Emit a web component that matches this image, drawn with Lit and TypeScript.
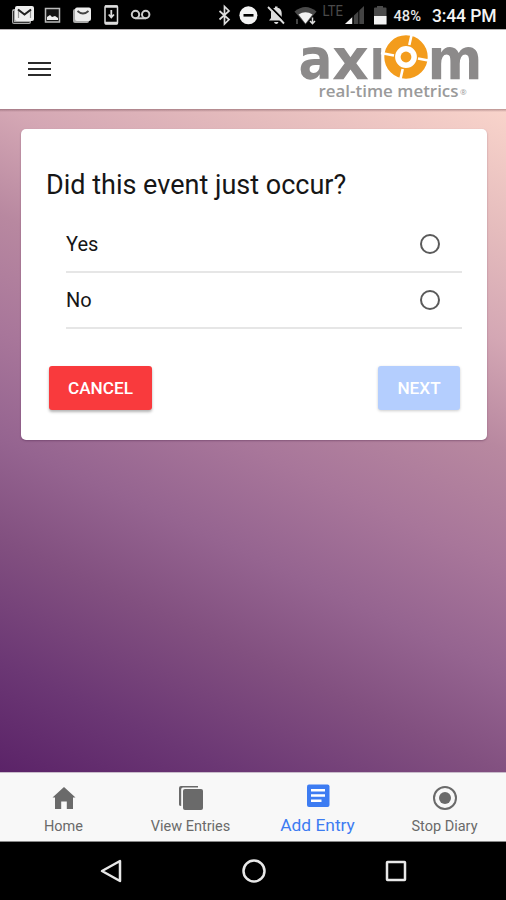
import { LitElement, css, html, svg } from "lit";
import { customElement, property, state } from "lit/decorators.js";
import { classMap } from "lit/directives/class-map.js";

@customElement("status-bar")
export class StatusBar extends LitElement {
  static styles = css`
    :host {
      display: block;
      height: 29px;
      background: #000;
      border-bottom: 1px solid #b4b0b2;
    }

    svg {
      display: block;
    }

    text {
      font-family: Roboto, sans-serif;
      fill: #e8e8e8;
    }

    .lte {
      font-size: 15px;
      fill: #4a4a4a;
    }

    .battery {
      font-size: 14px;
      font-weight: 500;
    }

    .clock {
      font-size: 17.5px;
      font-weight: 500;
      fill: #f4f4f4;
    }
  `;

  render() {
    return html`
      <svg width="506" height="29" viewBox="0 0 506 29">
        <!-- mail stack -->
        <rect x="12" y="9" width="19" height="15" rx="2" fill="#aaa" />
        <path d="M13.5 11v11.500h16" fill="none" stroke="#333" stroke-width="1" />
        <rect x="15" y="6" width="19" height="15" rx="2" fill="#eee" />
        <path d="M18.500 18V10l6 4.500 6-4.500v8" fill="none" stroke="#999" stroke-width="1.200" />
        <path d="M18 9.500l6.500 5 6.500-5" fill="none" stroke="#222" stroke-width="2" />
        <!-- picture -->
        <rect x="45.500" y="8.500" width="14" height="13.500" fill="#111" stroke="#bbb" stroke-width="1.500" />
        <path d="M47 20v-3l3-2 2 2 3-1 3 2v2z" fill="#eee" />
        <!-- mail -->
        <rect x="73" y="9" width="16" height="14" rx="2" fill="#aaa" />
        <rect x="75" y="7.500" width="16" height="13.500" rx="2" fill="#eee" />
        <path d="M77.500 11q5.500 5 11 0" fill="none" stroke="#444" stroke-width="1.800" />
        <!-- download -->
        <rect x="105" y="6" width="12.500" height="18" rx="1" fill="none" stroke="#ddd" stroke-width="1.500" />
        <path d="M105 6.500h12.500M105 23h12.500" stroke="#ddd" stroke-width="2.500" />
        <path d="M111.300 10v7M108.700 14.500l2.600 3 2.600-3" fill="none" stroke="#ddd" stroke-width="1.800" />
        <!-- voicemail -->
        <g fill="none" stroke="#ccc" stroke-width="2">
          <circle cx="135.500" cy="14.500" r="3.700" />
          <circle cx="145.700" cy="14.500" r="3.700" />
          <path d="M135.500 18.300h10.200" />
        </g>
        <!-- bluetooth -->
        <path d="M219.500 11l9.500 8.500-4.500 4.500V6.500l4.500 4.500-9.500 8.500" fill="none" stroke="#ddd" stroke-width="1.700" />
        <!-- do not disturb -->
        <circle cx="248.400" cy="15.300" r="9" fill="#f2f2f2" />
        <rect x="243.500" y="14" width="10" height="2.600" fill="#000" />
        <!-- muted bell -->
        <path d="M269 20.500l2-2.500v-5q.3-4.500 4-5.200V6.500h2.500v1.300q4 .7 4.200 5.200v5l2 2.500z" fill="#ddd" />
        <path d="M274 22h4.500q-.5 2-2.200 2t-2.300-2z" fill="#ddd" />
        <path d="M270 6.500l15 15" stroke="#000" stroke-width="2" />
        <path d="M268 7l16 16.500" stroke="#ddd" stroke-width="1.800" />
        <!-- wifi -->
        <path d="M294.500 11.500q11-9 22 0l-11 13z" fill="#4a4a4a" />
        <path d="M298.500 14.500q7-4.500 14 0l-7 9z" fill="#f2f2f2" />
        <path d="M312.500 17.500v6M310 21l2.500 2.700 2.500-2.700" fill="none" stroke="#ddd" stroke-width="1.500" />
        <path d="M297 24v-5" stroke="#444" stroke-width="2" />
        <text class="lte" x="322.500" y="16" textLength="20.500" lengthAdjust="spacingAndGlyphs">LTE</text>
        <!-- signal -->
        <path d="M345 24L364 6v18z" fill="#444" />
        <path d="M345 24l7-6.500V24z" fill="#f2f2f2" />
        <path d="M353.300 6v18M358.800 6v18" stroke="#000" stroke-width="1" />
        <!-- battery -->
        <path d="M374 24V8.500q0-1 1-1h2V6h6v1.500h2.500q1 0 1 1V24z" fill="#4a4a4a" />
        <rect x="374" y="16" width="12.500" height="8.500" fill="#f2f2f2" />
        <text class="battery" x="393.500" y="21" textLength="27.500" lengthAdjust="spacingAndGlyphs">48%</text>
        <text class="clock" x="432" y="22" textLength="64.500">3:44 PM</text>
      </svg>
    `;
  }
}

@customElement("axiom-logo")
export class AxiomLogo extends LitElement {
  static styles = css`
    :host {
      display: block;
    }

    svg {
      display: block;
      overflow: visible;
    }

    .word {
      font: bold 57px "DejaVu Sans", sans-serif;
      fill: #8c8a8a;
    }

    .tagline {
      font: 600 16px "Open Sans", sans-serif;
      fill: #9a9a9a;
    }

    .mark {
      font: 8px "Open Sans", sans-serif;
      fill: #999;
    }
  `;

  render() {
    return html`
      <svg width="184" height="68" viewBox="0 0 184 68">
        <g class="word">
          <text x="-0.500" y="42.500" textLength="34" lengthAdjust="spacingAndGlyphs">a</text>
          <text x="33" y="42.500" textLength="37" lengthAdjust="spacingAndGlyphs">x</text>
          <text x="70.500" y="42.500" textLength="15.500" lengthAdjust="spacingAndGlyphs">ı</text>
          <text x="128.500" y="42.500" textLength="55" lengthAdjust="spacingAndGlyphs">m</text>
        </g>
        <circle cx="107" cy="21" r="23.500" fill="#fff" />
        <circle cx="107" cy="21" r="16.300" fill="none" stroke="#f39c1c" stroke-width="10.800" />
        <path
          d="M110.300 9L113-3M119 22.500l13 2.500M103.700 33L101 45M95 19.500L82 17"
          stroke="#fff"
          stroke-width="2.600"
        />
        <circle cx="107" cy="21" r="5.400" fill="#f39c1c" />
        <text class="tagline" x="19.500" y="61" textLength="140" lengthAdjust="spacingAndGlyphs">real-time metrics</text>
        <text class="mark" x="161" y="59">®</text>
      </svg>
    `;
  }
}

@customElement("question-card")
export class QuestionCard extends LitElement {
  @property({ type: String })
  question = "";

  @property({ type: Array })
  options: string[] = [];

  @state()
  private selected = "";

  static styles = css`
    :host {
      display: flex;
      flex-direction: column;
      box-sizing: border-box;
      height: 311px;
      padding: 38px 25px 30px 26px;
      border-radius: 5px;
      background: #fff;
      box-shadow: 0 1px 2px rgba(60, 20, 60, 0.35);
    }

    h1 {
      margin: 0 0 14px -1px;
      font-size: 27px;
      font-weight: 400;
      line-height: 36px;
      color: #161616;
    }

    .option {
      display: flex;
      align-items: center;
      justify-content: space-between;
      box-sizing: border-box;
      height: 56px;
      margin-left: 19px;
      padding-right: 22px;
      border-bottom: 2px solid #e6e6e6;
      font-size: 20px;
      color: #161616;
    }

    .radio {
      box-sizing: border-box;
      width: 20px;
      height: 20px;
      border: 2px solid #5a5a5a;
      border-radius: 50%;
    }

    .radio.checked {
      background: #3d7bf0;
    }

    .actions {
      display: flex;
      justify-content: space-between;
      margin-top: auto;
      padding: 0 2px;
    }

    button {
      height: 44px;
      padding: 0 0 1px;
      border: 0;
      border-radius: 3px;
      font: 500 17.200px Roboto, sans-serif;
      color: #fff;
      background: #f93a3d;
      box-shadow: 0 2px 3px rgba(0, 0, 0, 0.3);
    }

    .cancel {
      width: 103px;
    }

    .next {
      width: 82px;
      background: #b4cefe;
      box-shadow: 0 1px 3px rgba(0, 0, 0, 0.2);
    }
  `;

  render() {
    return html`
      <h1>${this.question}</h1>
      ${this.options.map(
        (option) => html`
          <div class="option" @click=${() => (this.selected = option)}>
            <span>${option}</span>
            <span class=${classMap({ radio: true, checked: this.selected === option })}></span>
          </div>
        `,
      )}
      <div class="actions">
        <button class="cancel">CANCEL</button>
        <button class="next">NEXT</button>
      </div>
    `;
  }
}

const tabs = [
  {
    label: "Home",
    icon: svg`<path d="M13 2L1.500 12.500H4V24h6.200v-7.500h5.600V24H22V12.500h2.500z" fill="currentColor" />`,
  },
  {
    label: "View Entries",
    icon: svg`
      <path d="M1 19.500V3q0-2 2-2h17v1.500H5q-1.800 0-1.800 1.800V21Q1 21 1 19.500z" fill="currentColor" />
      <rect x="5" y="4" width="20" height="21" rx="2" fill="currentColor" />
    `,
  },
  {
    label: "Add Entry",
    icon: svg`
      <rect x="2" y="1.500" width="22.500" height="22.500" rx="2" fill="currentColor" />
      <path d="M6 7.300h14M6 12.500h14M6 17.700h10.500" stroke="#fff" stroke-width="2.500" />
    `,
  },
  {
    label: "Stop Diary",
    icon: svg`
      <circle cx="13" cy="13" r="11" fill="none" stroke="currentColor" stroke-width="2" />
      <circle cx="13" cy="13" r="6" fill="currentColor" />
    `,
  },
];

@customElement("tab-bar")
export class TabBar extends LitElement {
  @property({ type: String })
  active = "Add Entry";

  static styles = css`
    :host {
      display: grid;
      grid-template-columns: repeat(4, 127px);
      box-sizing: border-box;
      height: 70px;
      background: #f8f8f8;
      border-top: 1px solid #c9bccb;
      border-bottom: 1px solid #888;
    }

    .tab {
      display: flex;
      flex-direction: column;
      align-items: center;
      padding-top: 12px;
      color: #6a6a6a;
      font-size: 14.500px;
      line-height: 20px;
      white-space: nowrap;
    }

    .tab span {
      margin-top: 6px;
    }

    .tab.active {
      padding-top: 10px;
      color: #3d7cf2;
      font-size: 17.400px;
    }

    svg {
      display: block;
    }
  `;

  render() {
    return tabs.map(
      (tab) => html`
        <div class=${classMap({ tab: true, active: tab.label === this.active })}>
          <svg width="26" height="26" viewBox="0 0 26 26">${tab.icon}</svg>
          <span>${tab.label}</span>
        </div>
      `,
    );
  }
}

@customElement("app-root")
export class AppRoot extends LitElement {
  static styles = css`
    :host {
      display: flex;
      flex-direction: column;
      width: 506px;
      height: 900px;
      overflow: hidden;
      font-family: Roboto, sans-serif;
      background: #000;
    }

    header {
      display: flex;
      align-items: center;
      justify-content: space-between;
      box-sizing: border-box;
      height: 79px;
      padding: 0 23px 0 28px;
      background: #fff;
    }

    .menu {
      display: flex;
      flex-direction: column;
      gap: 4px;
      width: 23px;
      padding-bottom: 1px;
    }

    .menu i {
      height: 2px;
      background: #2b2b2b;
    }

    main {
      flex: 1;
      padding: 20px 19px 0 21px;
      background:
        linear-gradient(rgba(90, 50, 60, 0.4), transparent 3px),
        linear-gradient(
          205deg,
          #f9d4cb 0%,
          #e5bcbd 14%,
          #d4a7b4 26%,
          #b888a0 38%,
          #a8769a 51%,
          #956490 63%,
          #825080 74%,
          #6b3774 88%,
          #5b2368 100%
        );
    }

    nav {
      display: flex;
      justify-content: center;
      align-items: center;
      gap: 116px;
      height: 58px;
      padding-left: 2px;
      background: #000;
    }

    nav svg {
      display: block;
      fill: none;
      stroke: #e8e8e8;
      stroke-width: 2.500;
    }
  `;

  render() {
    return html`
      <status-bar></status-bar>
      <header>
        <div class="menu"><i></i><i></i><i></i></div>
        <axiom-logo></axiom-logo>
      </header>
      <main>
        <question-card question="Did this event just occur?" .options=${["Yes", "No"]}></question-card>
      </main>
      <tab-bar></tab-bar>
      <nav>
        <svg width="26" height="26" viewBox="0 0 26 26"><path d="M3 13L21 3v20z" stroke-linejoin="round" /></svg>
        <svg width="26" height="26" viewBox="0 0 26 26"><circle cx="13" cy="13" r="10.500" /></svg>
        <svg width="26" height="26" viewBox="0 0 26 26"><rect x="4" y="4" width="18" height="18" rx="0.500" /></svg>
      </nav>
    `;
  }
}
